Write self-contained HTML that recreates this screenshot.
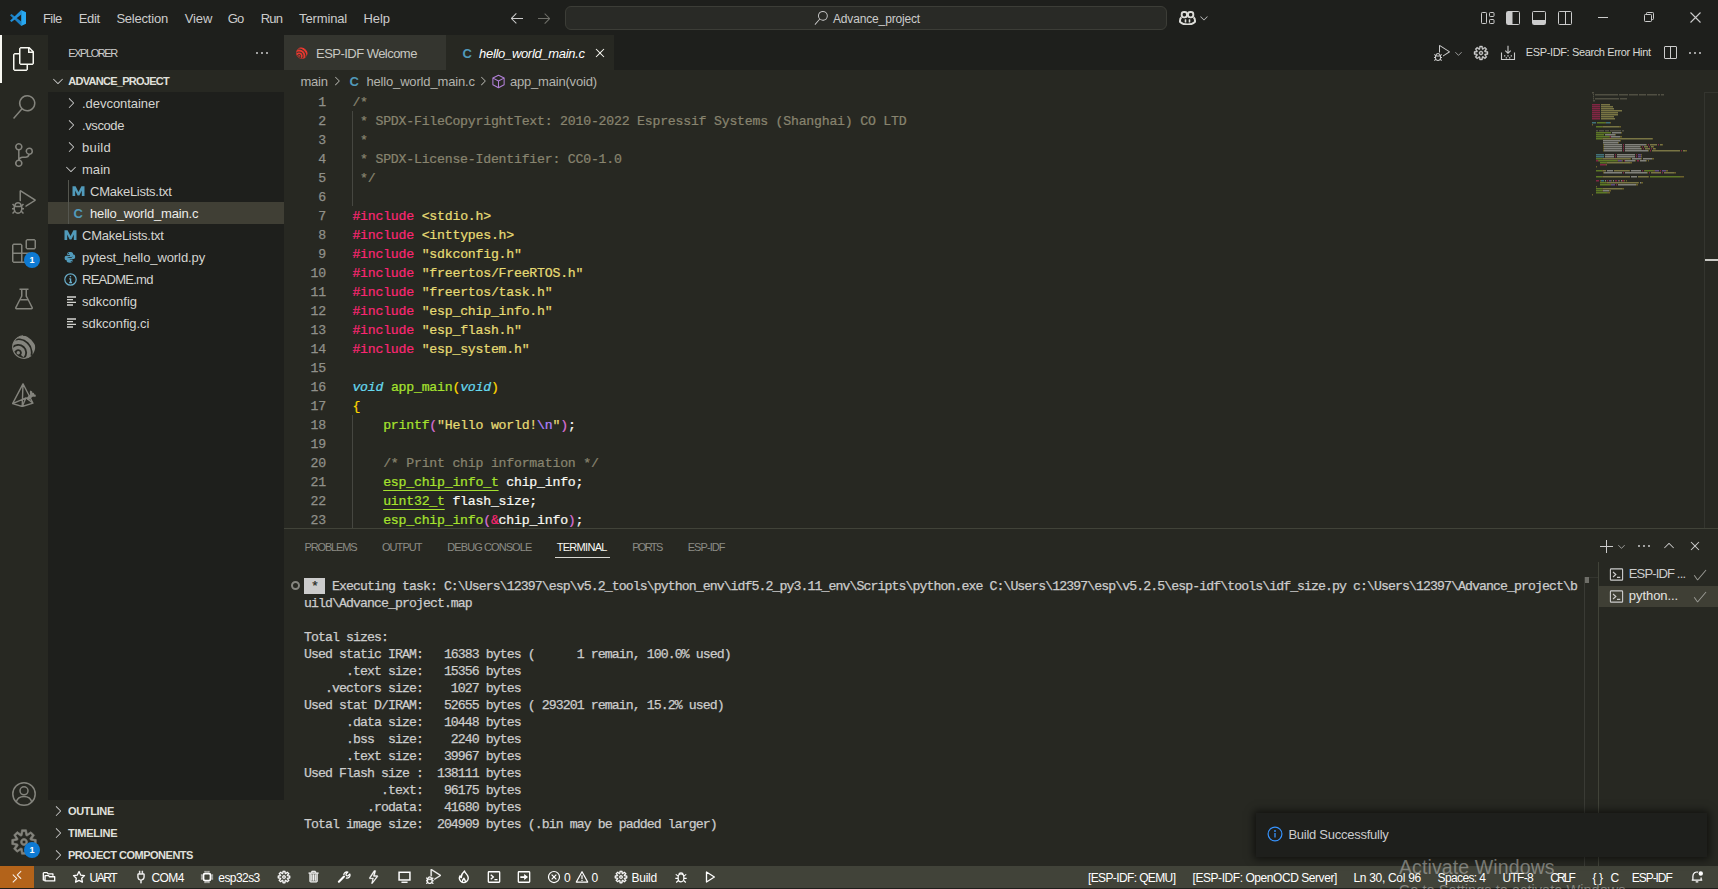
<!DOCTYPE html>
<html lang="en"><head><meta charset="utf-8"><title>hello_world_main.c - Advance_project - Visual Studio Code</title>
<style>
html,body{margin:0;padding:0;}
body{width:1718px;height:889px;overflow:hidden;background:#272822;position:relative;font-family:"Liberation Sans",sans-serif;font-size:13px;color:#ccc;}
.b{position:absolute;display:block;}
.t{position:absolute;white-space:pre;display:block;}
.code{position:absolute;white-space:pre;font-family:"Liberation Mono",monospace;font-size:13.2px;line-height:19px;color:#f8f8f2;letter-spacing:-0.22px;-webkit-text-stroke:0.24px;}
.term{position:absolute;white-space:pre;font-family:"Liberation Mono",monospace;font-size:13.2px;line-height:17px;color:#ccc;letter-spacing:-0.92px;-webkit-text-stroke:0.25px;}
.ln{position:absolute;white-space:pre;font-family:"Liberation Mono",monospace;font-size:13.2px;line-height:19px;color:#90908a;text-align:right;letter-spacing:-0.22px;-webkit-text-stroke:0.25px;}
.k{color:#f92672}.s{color:#e6db74}.c{color:#88846f}.f{color:#a6e22e}.ty{color:#66d9ef;font-style:italic}.u{color:#a6e22e;text-decoration:underline;text-underline-offset:4px;text-decoration-thickness:1px}.e{color:#ae81ff}
.b1{color:#ffd700}.b2{color:#da70d6}.b3{color:#179fff}
</style></head><body>
<div class="b" style="left:0px;top:0px;width:1718px;height:35px;background:#1e1f1c;"></div>
<div class="b" style="left:0px;top:35px;width:48px;height:831px;background:#272822;"></div>
<div class="b" style="left:48px;top:35px;width:236px;height:831px;background:#1e1f1c;"></div>
<div class="b" style="left:284px;top:35px;width:1434px;height:35px;background:#1e1f1c;"></div>
<div class="b" style="left:284px;top:35px;width:162px;height:35px;background:#34352f;"></div>
<div class="b" style="left:446px;top:35px;width:168px;height:35px;background:#272822;"></div>
<div class="b" style="left:0px;top:35px;width:2px;height:48px;background:#f8f8f2;"></div>
<span class="t" style="left:43.0px;top:8.9px;font-size:13px;line-height:20px;color:#cccccc;letter-spacing:-0.584px;">File</span>
<span class="t" style="left:78.8px;top:8.9px;font-size:13px;line-height:20px;color:#cccccc;letter-spacing:-0.369px;">Edit</span>
<span class="t" style="left:116.4px;top:8.9px;font-size:13px;line-height:20px;color:#cccccc;letter-spacing:-0.211px;">Selection</span>
<span class="t" style="left:184.7px;top:8.9px;font-size:13px;line-height:20px;color:#cccccc;letter-spacing:-0.118px;">View</span>
<span class="t" style="left:227.8px;top:8.9px;font-size:13px;line-height:20px;color:#cccccc;letter-spacing:-0.944px;">Go</span>
<span class="t" style="left:260.8px;top:8.9px;font-size:13px;line-height:20px;color:#cccccc;letter-spacing:-0.880px;">Run</span>
<span class="t" style="left:299.1px;top:8.9px;font-size:13px;line-height:20px;color:#cccccc;letter-spacing:-0.146px;">Terminal</span>
<span class="t" style="left:363.5px;top:8.9px;font-size:13px;line-height:20px;color:#cccccc;letter-spacing:-0.083px;">Help</span>
<div class="b" style="left:565px;top:6px;width:600px;height:22px;border:1px solid #3c3d37;border-radius:6px;background:#292a26"></div>
<span class="t" style="left:833.0px;top:8.8px;font-size:12px;line-height:20px;color:#cccccc;letter-spacing:-0.156px;">Advance_project</span>
<span class="t" style="left:68.3px;top:43.0px;font-size:11px;line-height:20px;color:#cccccc;letter-spacing:-1.446px;">EXPLORER</span>
<div class="b" style="left:48px;top:70px;width:236px;height:22px;background:#272822;"></div>
<span class="t" style="left:68.3px;top:71.0px;font-size:11px;line-height:20px;color:#e0e0dc;letter-spacing:-0.733px;font-weight:bold;">ADVANCE_PROJECT</span>
<div class="b" style="left:48px;top:202px;width:236px;height:22px;background:#403f35;"></div>
<div class="b" style="left:68px;top:180px;width:1px;height:44px;background:#55564f;"></div>
<span class="t" style="left:82.0px;top:93.9px;font-size:13px;line-height:20px;color:#d4d4d0;letter-spacing:-0.039px;">.devcontainer</span>
<span class="t" style="left:82.0px;top:115.9px;font-size:13px;line-height:20px;color:#d4d4d0;letter-spacing:-0.402px;">.vscode</span>
<span class="t" style="left:82.0px;top:137.9px;font-size:13px;line-height:20px;color:#d4d4d0;letter-spacing:0.333px;">build</span>
<span class="t" style="left:82.0px;top:159.9px;font-size:13px;line-height:20px;color:#d4d4d0;letter-spacing:0.037px;">main</span>
<span class="t" style="left:90.0px;top:181.9px;font-size:13px;line-height:20px;color:#d4d4d0;letter-spacing:-0.258px;">CMakeLists.txt</span>
<span class="t" style="left:90.0px;top:203.9px;font-size:13px;line-height:20px;color:#ecece8;letter-spacing:-0.164px;">hello_world_main.c</span>
<span class="t" style="left:82.0px;top:225.9px;font-size:13px;line-height:20px;color:#d4d4d0;letter-spacing:-0.258px;">CMakeLists.txt</span>
<span class="t" style="left:82.0px;top:247.9px;font-size:13px;line-height:20px;color:#d4d4d0;letter-spacing:-0.092px;">pytest_hello_world.py</span>
<span class="t" style="left:82.0px;top:269.9px;font-size:13px;line-height:20px;color:#d4d4d0;letter-spacing:-0.737px;">README.md</span>
<span class="t" style="left:82.0px;top:291.9px;font-size:13px;line-height:20px;color:#d4d4d0;letter-spacing:0.022px;">sdkconfig</span>
<span class="t" style="left:82.0px;top:313.9px;font-size:13px;line-height:20px;color:#d4d4d0;letter-spacing:-0.047px;">sdkconfig.ci</span>
<div class="b" style="left:48px;top:800px;width:236px;height:66px;background:#272822;"></div>
<span class="t" style="left:68.0px;top:801.0px;font-size:11px;line-height:20px;color:#e0e0dc;letter-spacing:-0.330px;font-weight:bold;">OUTLINE</span>
<span class="t" style="left:68.0px;top:823.0px;font-size:11px;line-height:20px;color:#e0e0dc;letter-spacing:-0.249px;font-weight:bold;">TIMELINE</span>
<span class="t" style="left:68.0px;top:845.0px;font-size:11px;line-height:20px;color:#e0e0dc;letter-spacing:-0.498px;font-weight:bold;">PROJECT COMPONENTS</span>
<span class="t" style="left:316.1px;top:43.9px;font-size:13px;line-height:20px;color:#c8c8c2;letter-spacing:-0.539px;">ESP-IDF Welcome</span>
<span class="t" style="left:479.1px;top:43.9px;font-size:13px;line-height:20px;color:#ffffff;letter-spacing:-0.317px;font-style:italic;">hello_world_main.c</span>
<span class="t" style="left:1525.8px;top:41.8px;font-size:11px;line-height:20px;color:#d8d8d4;letter-spacing:-0.371px;">ESP-IDF: Search Error Hint</span>
<span class="t" style="left:300.4px;top:71.9px;font-size:13px;line-height:20px;color:#b4b4ae;letter-spacing:-0.196px;">main</span>
<span class="t" style="left:366.4px;top:71.9px;font-size:13px;line-height:20px;color:#b4b4ae;letter-spacing:-0.158px;">hello_world_main.c</span>
<span class="t" style="left:510.0px;top:71.9px;font-size:13px;line-height:20px;color:#b4b4ae;letter-spacing:-0.201px;">app_main(void)</span>
<div class="b" style="left:0px;top:866px;width:1718px;height:22px;background:#414339;"></div>
<div class="b" style="left:0px;top:866px;width:34px;height:22px;background:#b3631a;"></div>
<div class="b" style="left:0px;top:888px;width:1718px;height:1px;background:#1e1f1c;"></div>
<span class="t" style="left:89.4px;top:867.5px;font-size:12px;line-height:20px;color:#ffffff;letter-spacing:-1.418px;">UART</span>
<span class="t" style="left:151.4px;top:867.5px;font-size:12px;line-height:20px;color:#ffffff;letter-spacing:-0.524px;">COM4</span>
<span class="t" style="left:218.3px;top:867.5px;font-size:12px;line-height:20px;color:#ffffff;letter-spacing:-0.562px;">esp32s3</span>
<span class="t" style="left:564.0px;top:867.5px;font-size:12px;line-height:20px;color:#ffffff;letter-spacing:0.000px;">0</span>
<span class="t" style="left:591.5px;top:867.5px;font-size:12px;line-height:20px;color:#ffffff;letter-spacing:0.000px;">0</span>
<span class="t" style="left:631.6px;top:867.5px;font-size:12px;line-height:20px;color:#ffffff;letter-spacing:-0.297px;">Build</span>
<span class="t" style="left:1088.0px;top:867.5px;font-size:12px;line-height:20px;color:#ffffff;letter-spacing:-0.621px;">[ESP-IDF: QEMU]</span>
<span class="t" style="left:1192.5px;top:867.5px;font-size:12px;line-height:20px;color:#ffffff;letter-spacing:-0.441px;">[ESP-IDF: OpenOCD Server]</span>
<span class="t" style="left:1353.4px;top:867.5px;font-size:12px;line-height:20px;color:#ffffff;letter-spacing:-0.299px;">Ln 30, Col 96</span>
<span class="t" style="left:1437.6px;top:867.5px;font-size:12px;line-height:20px;color:#ffffff;letter-spacing:-0.634px;">Spaces: 4</span>
<span class="t" style="left:1502.4px;top:867.5px;font-size:12px;line-height:20px;color:#ffffff;letter-spacing:-0.650px;">UTF-8</span>
<span class="t" style="left:1550.2px;top:867.5px;font-size:12px;line-height:20px;color:#ffffff;letter-spacing:-1.881px;">CRLF</span>
<span class="t" style="left:1592.4px;top:867.5px;font-size:12px;line-height:20px;color:#ffffff;letter-spacing:2.584px;">{}</span>
<span class="t" style="left:1610.4px;top:867.5px;font-size:12px;line-height:20px;color:#ffffff;letter-spacing:0.000px;">C</span>
<span class="t" style="left:1631.8px;top:867.5px;font-size:12px;line-height:20px;color:#ffffff;letter-spacing:-1.057px;">ESP-IDF</span>
<svg class="b" style="left:12px;top:47px;" width="24" height="24" viewBox="0 0 24 24" fill="none"><path d="M17.5 0h-9L7 1.5V6H2.5L1 7.5v15.07L2.5 24h12.07L16 22.57V18h4.7l1.3-1.43V4.5L17.5 0zm0 2.12l2.38 2.38H17.5V2.12zm-3 20.38h-12v-15H7v9.07L8.5 18h6v4.5zm6-6h-12v-15H16V6h4.5v10.5z" fill="#f8f8f2" /></svg>
<svg class="b" style="left:12px;top:95px;" width="24" height="24" viewBox="0 0 24 24" fill="none"><path d="M15.25 0a8.25 8.25 0 0 0-6.18 13.72L1 22.88l1.12 1 8.05-9.12A8.251 8.251 0 1 0 15.25.01V0zm0 15a6.75 6.75 0 1 1 0-13.5 6.75 6.75 0 0 1 0 13.5z" fill="#84847d" /></svg>
<svg class="b" style="left:12px;top:143px;" width="24" height="24" viewBox="0 0 24 24" fill="none"><path d="M21.007 8.222A3.738 3.738 0 0 0 15.045 5.2a3.737 3.737 0 0 0 1.156 6.583 2.988 2.988 0 0 1-2.668 1.67h-2.99a4.456 4.456 0 0 0-2.989 1.165V7.4a3.737 3.737 0 1 0-1.494 0v9.117a3.776 3.776 0 1 0 1.816.099 2.99 2.99 0 0 1 2.668-1.667h2.99a4.484 4.484 0 0 0 4.223-3.039 3.736 3.736 0 0 0 3.25-3.687zM4.565 3.738a2.242 2.242 0 1 1 4.484 0 2.242 2.242 0 0 1-4.484 0zm4.484 16.441a2.242 2.242 0 1 1-4.484 0 2.242 2.242 0 0 1 4.484 0zm8.221-9.715a2.242 2.242 0 1 1 0-4.485 2.242 2.242 0 0 1 0 4.485z" fill="#84847d" /></svg>
<svg class="b" style="left:12px;top:190px;" width="24" height="24" viewBox="0 0 24 24" fill="none"><path d="M10.94 13.5l-1.32 1.32a3.73 3.73 0 0 0-7.24 0L1.06 13.5 0 14.56l1.72 1.72-.22.22V18H0v1.5h1.5v.08c.077.489.214.966.41 1.42L0 22.94 1.06 24l1.65-1.65A4.308 4.308 0 0 0 6 24a4.31 4.31 0 0 0 3.29-1.65L10.94 24 12 22.94 10.09 21c.198-.464.336-.951.41-1.45v-.1H12V18h-1.5v-1.5l-.22-.22L12 14.56l-1.060-1.060zM6 13.5a2.25 2.25 0 0 1 2.25 2.25h-4.500A2.250 2.250 0 0 1 6 13.500zm3 6a3.330 3.330 0 0 1-3 3 3.330 3.330 0 0 1-3-3v-2.250h6v2.250zm14.760-9.900v1.260L13.500 17.370V15.600l8.500-5.370L9 2v9.460a5.070 5.070 0 0 0-1.500-.720V.630L8.640 0l15.120 9.600z" fill="#84847d" /></svg>
<svg class="b" style="left:12px;top:239px;" width="24" height="24" viewBox="0 0 24 24" fill="none"><path d="M13.5 1.5L15 0h7.5L24 1.5V9l-1.5 1.5H15L13.5 9V1.5zm1.5 0V9h7.5V1.5H15zM0 15V6l1.5-1.5H9L10.5 6v7.5H18l1.5 1.5v7.5L18 24H1.5L0 22.5V15zm9-1.5V6H1.5v7.5H9zM9 15H1.5v7.5H9V15zm1.5 7.5H18V15h-7.5v7.5z" fill="#84847d" /></svg>
<svg class="b" style="left:12px;top:287px;" width="24" height="24" viewBox="0 0 16 16" fill="none"><path d="M13.893 13.558L10 6.006v-4h1v-1H9.994V1l-.456.005H5V2h1v3.952l-3.894 7.609A1 1 0 0 0 3 15.006h10a1 1 0 0 0 .893-1.448zm-7-7.15L7 6.178V2h2v4.248l.107.23.916 1.528H5.977l.916-1.598zM3 14.017l2.457-5.01h5.087L13 14.017H3z" fill="#84847d" /></svg>
<svg class="b" style="left:12px;top:335px;" width="24" height="24" viewBox="0 0 24 24" fill="none"><clipPath id="ec1"><circle cx="12" cy="12" r="11.200"/></clipPath><g clip-path="url(#ec1)" fill="none" stroke="#84847d"><path d="M1.22 15.99A5.30 5.30 0 1 1 10.26 21.21" stroke-width="3.400"/><path d="M-2.07 10.86A10.80 10.80 0 1 1 13.84 25.44" stroke-width="3.800"/><path d="M-2.00 3.60A16.40 16.40 0 0 1 20.40 26.00" stroke-width="4"/></g><path d="M19.26 20.66A11.30 11.30 0 1 1 11.02 0.74" stroke="#84847d" stroke-width="1.100" fill="none"/><circle cx="6.300" cy="17.700" r="1.700" fill="#84847d"/></svg>
<svg class="b" style="left:12px;top:383px;" width="24" height="24" viewBox="0 0 24 24" fill="none"><path d="M11 .8L.6 20.600l9.600 2.900 10.800-3.300zM11 .8l-.8 22.700M.6 20.600l13.400-5.800 7 5.400M14 14.800l-3.800 8.700" stroke="#84847d" stroke-width="1.4" fill="none" stroke-linejoin="round"/><path d="M16.400 15.400l4.200-4.200" stroke="#84847d" stroke-width="3.4" fill="none" stroke-linecap="round"/><path d="M19.300 8a3.200 3.200 0 0 0 4.300 4.300" stroke="#84847d" stroke-width="2.2" fill="none" /></svg>
<svg class="b" style="left:12px;top:782px;" width="24" height="24" viewBox="0 0 24 24" fill="none"><circle cx="12" cy="12" r="11.2" stroke="#84847d" stroke-width="1.5" fill="none"/><circle cx="12" cy="8.800" r="4" stroke="#84847d" stroke-width="1.500" fill="none"/><path d="M4.300 20c.9-3.700 3.900-5.500 7.700-5.500s6.800 1.800 7.700 5.500" stroke="#84847d" stroke-width="1.5" fill="none" /></svg>
<svg class="b" style="left:10px;top:828.3px;" width="28" height="28" viewBox="0 0 16 16" fill="none"><path d="M9.1 4.4L8.6 2H7.4l-.5 2.4-.7.3-2-1.3-.9.8 1.3 2-.2.7-2.4.5v1.2l2.4.5.3.8-1.3 2 .8.8 2-1.3.8.3.4 2.3h1.2l.5-2.4.8-.3 2 1.3.8-.8-1.3-2 .3-.8 2.3-.4V7.4l-2.4-.5-.3-.8 1.3-2-.8-.8-2 1.3-.7-.2zM9.4 1l.5 2.4L12 2.1l2 2-1.4 2.1 2.4.4v2.8l-2.4.5L14 12l-2 2-2.1-1.4-.5 2.4H6.6l-.5-2.4L4 13.9l-2-2 1.4-2.1L1 9.4V6.6l2.4-.5L2.1 4l2-2 2.1 1.4.4-2.4h2.8zm.6 7c0 1.1-.9 2-2 2s-2-.9-2-2 .9-2 2-2 2 .9 2 2zM8 9c.6 0 1-.4 1-1s-.4-1-1-1-1 .4-1 1 .4 1 1 1z" fill="#84847d" stroke="#84847d" stroke-width=".35"/></svg>
<div class="b" style="left:24px;top:251.5px;width:16px;height:16px;border-radius:8px;background:#0e7ad3"></div>
<span class="t" style="left:29.4px;top:253.8px;font-size:9px;line-height:12px;color:#ffffff;letter-spacing:0.000px;font-weight:bold;">1</span>
<div class="b" style="left:24px;top:841.7px;width:16px;height:16px;border-radius:8px;background:#0e7ad3"></div>
<span class="t" style="left:29.4px;top:844.0px;font-size:9px;line-height:12px;color:#ffffff;letter-spacing:0.000px;font-weight:bold;">1</span>
<svg class="b" style="left:10px;top:10px;" width="16" height="16" viewBox="0 0 16 16" fill="none"><path d="M0 5.300L1.500 4l9.800 7.600v4.300z" fill="#1b80c6"/><path d="M0 10.700L1.500 12l9.800-7.600V.1z" fill="#218fd8"/><path d="M11.200 .1L16 2.200v11.600l-4.800 2.100z" fill="#27a7f1"/></svg>
<svg class="b" style="left:509px;top:10px;" width="16" height="16" viewBox="0 0 16 16" fill="none"><path d="M7 3.093l-5 5V8.8l5 5 .707-.707-4.146-4.147H14v-1H3.56L7.707 3.8 7 3.093z" fill="#cccccc" /></svg>
<svg class="b" style="left:536px;top:10px;" width="16" height="16" viewBox="0 0 16 16" fill="none"><path d="M9 13.887l5-5V8.18l-5-5-.707.707 4.146 4.147H2v1h10.44L8.293 13.18l.707.707z" fill="#6f6f69" /></svg>
<svg class="b" style="left:814px;top:11px;" width="14" height="14" viewBox="0 0 24 24" fill="none"><path d="M15.25 0a8.25 8.25 0 0 0-6.18 13.72L1 22.88l1.12 1 8.05-9.12A8.251 8.251 0 1 0 15.25.01V0zm0 15a6.75 6.75 0 1 1 0-13.5 6.75 6.75 0 0 1 0 13.5z" fill="#cccccc" /></svg>
<svg class="b" style="left:1179px;top:10.6px;" width="17" height="14.6" viewBox="0 0 17 14.600" fill="none"><path d="M2.400 6.400C1 7.300 1 8.700 1 9.800v1.100c1.900 1.900 4.600 2.700 7.500 2.700s5.600-.8 7.500-2.700V9.800c0-1.100 0-2.500-1.400-3.400" stroke="#dcdcd8" stroke-width="2" fill="none"/><rect x="2.700" y="1" width="5.300" height="5.400" rx="2.300" stroke="#dcdcd8" stroke-width="1.900"/><rect x="9" y="1" width="5.300" height="5.400" rx="2.300" stroke="#dcdcd8" stroke-width="1.900"/><rect x="5.700" y="8.200" width="1.600" height="3.300" rx=".5" fill="#dcdcd8"/><rect x="9.700" y="8.200" width="1.600" height="3.300" rx=".5" fill="#dcdcd8"/></svg>
<svg class="b" style="left:1198px;top:12px;" width="12" height="12" viewBox="0 0 16 16" fill="none"><path d="M7.976 10.072l4.357-4.357.62.618L8.284 11h-.618L3 6.333l.619-.618 4.357 4.357z" fill="#cccccc" /></svg>
<svg class="b" style="left:1479.5px;top:10px;" width="16" height="16" viewBox="0 0 16 16" fill="none"><rect x="1.500" y="2.500" width="5" height="11" rx=".8" stroke="#cccccc"/><rect x="9.500" y="2.500" width="4.500" height="4" rx=".8" stroke="#cccccc"/><rect x="9.500" y="9.500" width="4.500" height="4" rx=".8" stroke="#cccccc"/></svg>
<svg class="b" style="left:1505px;top:10px;" width="16" height="16" viewBox="0 0 16 16" fill="none"><rect x="1.500" y="1.500" width="13" height="13" rx="1" stroke="#cccccc"/><rect x="2" y="2" width="5.500" height="12" fill="#cccccc"/></svg>
<svg class="b" style="left:1531px;top:10px;" width="16" height="16" viewBox="0 0 16 16" fill="none"><rect x="1.500" y="1.500" width="13" height="13" rx="1" stroke="#cccccc"/><rect x="2" y="10" width="12" height="4" fill="#cccccc"/></svg>
<svg class="b" style="left:1557px;top:10px;" width="16" height="16" viewBox="0 0 16 16" fill="none"><rect x="1.500" y="1.500" width="13" height="13" rx="1" stroke="#cccccc"/><path d="M8.500 2v12" stroke="#cccccc"/></svg>
<div class="b" style="left:1598px;top:17px;width:10px;height:1px;background:#cccccc;"></div>
<svg class="b" style="left:1643px;top:11px;" width="12" height="12" viewBox="0 0 12 12" fill="none"><path d="M3.500 3.500V2.300a.8.8 0 0 1 .8-.8h5.400a.8.8 0 0 1 .8.8v5.400a.8.8 0 0 1-.8.8H8.500" stroke="#ccc"/><rect x="1.500" y="3.500" width="7" height="7" rx=".8" stroke="#ccc"/></svg>
<svg class="b" style="left:1689.5px;top:11.5px;" width="11" height="11" viewBox="0 0 11 11" fill="none"><path d="M.5.500l10 10M10.500.500l-10 10" stroke="#ccc" stroke-width="1.100"/></svg>
<svg class="b" style="left:254px;top:45px;" width="16" height="16" viewBox="0 0 16 16" fill="none"><path d="M4 8a1 1 0 1 1-2 0 1 1 0 0 1 2 0zm5 0a1 1 0 1 1-2 0 1 1 0 0 1 2 0zm5 0a1 1 0 1 1-2 0 1 1 0 0 1 2 0z" fill="#cccccc" /></svg>
<svg class="b" style="left:50px;top:73px;" width="16" height="16" viewBox="0 0 16 16" fill="none"><path d="M7.976 10.072l4.357-4.357.62.618L8.284 11h-.618L3 6.333l.619-.618 4.357 4.357z" fill="#cccccc" /></svg>
<svg class="b" style="left:63px;top:95px;" width="16" height="16" viewBox="0 0 16 16" fill="none"><path d="M10.072 8.024L5.715 3.667l.618-.62L11 7.716v.618L6.333 13l-.618-.619 4.357-4.357z" fill="#cccccc" /></svg>
<svg class="b" style="left:63px;top:117px;" width="16" height="16" viewBox="0 0 16 16" fill="none"><path d="M10.072 8.024L5.715 3.667l.618-.62L11 7.716v.618L6.333 13l-.618-.619 4.357-4.357z" fill="#cccccc" /></svg>
<svg class="b" style="left:63px;top:139px;" width="16" height="16" viewBox="0 0 16 16" fill="none"><path d="M10.072 8.024L5.715 3.667l.618-.62L11 7.716v.618L6.333 13l-.618-.619 4.357-4.357z" fill="#cccccc" /></svg>
<svg class="b" style="left:63px;top:161px;" width="16" height="16" viewBox="0 0 16 16" fill="none"><path d="M7.976 10.072l4.357-4.357.62.618L8.284 11h-.618L3 6.333l.619-.618 4.357 4.357z" fill="#cccccc" /></svg>
<svg class="b" style="left:50px;top:803px;" width="16" height="16" viewBox="0 0 16 16" fill="none"><path d="M10.072 8.024L5.715 3.667l.618-.62L11 7.716v.618L6.333 13l-.618-.619 4.357-4.357z" fill="#cccccc" /></svg>
<svg class="b" style="left:50px;top:825px;" width="16" height="16" viewBox="0 0 16 16" fill="none"><path d="M10.072 8.024L5.715 3.667l.618-.62L11 7.716v.618L6.333 13l-.618-.619 4.357-4.357z" fill="#cccccc" /></svg>
<svg class="b" style="left:50px;top:847px;" width="16" height="16" viewBox="0 0 16 16" fill="none"><path d="M10.072 8.024L5.715 3.667l.618-.62L11 7.716v.618L6.333 13l-.618-.619 4.357-4.357z" fill="#cccccc" /></svg>
<svg class="b" style="left:71.7px;top:185px;" width="13" height="12" viewBox="0 0 13 12" fill="none"><path d="M.5 11V1.200h3.100l2.900 5.800 2.900-5.800h3.100V11H9.800V5.600L7.400 10.400H5.600L3.200 5.600V11z" fill="#519aba"/></svg>
<svg class="b" style="left:63.7px;top:229px;" width="13" height="12" viewBox="0 0 13 12" fill="none"><path d="M.5 11V1.200h3.100l2.900 5.800 2.900-5.800h3.100V11H9.800V5.600L7.400 10.400H5.600L3.200 5.600V11z" fill="#519aba"/></svg>
<span class="t" style="left:73.6px;top:203.9px;font-size:13px;line-height:20px;color:#519aba;letter-spacing:0.000px;font-weight:bold;">C</span>
<svg class="b" style="left:63.9px;top:251.1px;" width="11.8" height="11.8" viewBox="0 0 13 13" fill="none"><path d="M6.400 1C4.600 1 3.600 1.700 3.600 2.900v1.600h3v.6H2.500C1.400 5.100.7 6 .7 7.600s.7 2.500 1.800 2.500h1.100V8.500c0-1.100.9-1.900 2-1.900h2.800c.9 0 1.600-.7 1.600-1.600V2.900C10 1.700 8.700 1 6.400 1zM5 1.900a.6.6 0 1 1 0 1.200.6.6 0 0 1 0-1.200z" fill="#519aba"/><path d="M9.400 3.900v1.500c0 1.100-.9 2-2 2H4.600c-.9 0-1.600.7-1.600 1.600v2.100c0 1.200 1.300 1.900 3.600 1.900 1.800 0 2.800-.7 2.800-1.900V9.500h-3v-.6h4.100c1.100 0 1.800-.9 1.800-2.500s-.7-2.500-1.800-2.500zM8 10.900a.6.600 0 1 1 0 1.200.6.600 0 0 1 0-1.200z" fill="#519aba"/></svg>
<svg class="b" style="left:63.5px;top:272.8px;" width="13" height="13" viewBox="0 0 13 13" fill="none"><circle cx="6.500" cy="6.500" r="5.700" stroke="#6aaecb" stroke-width="1.200"/><path d="M6.600 5.600v4M5.200 5.800h1.400M5.200 9.500h2.800" stroke="#6aaecb" stroke-width="1.300"/><circle cx="6.400" cy="3.700" r=".8" fill="#6aaecb"/></svg>
<svg class="b" style="left:67px;top:296px;" width="10" height="10" viewBox="0 0 10 10" fill="none"><path d="M0 1h9M0 3.700h6M0 6.300h9M0 9h6" stroke="#d4d4d0" stroke-width="1.300"/></svg>
<svg class="b" style="left:67px;top:318px;" width="10" height="10" viewBox="0 0 10 10" fill="none"><path d="M0 1h9M0 3.700h6M0 6.300h9M0 9h6" stroke="#d4d4d0" stroke-width="1.300"/></svg>
<svg class="b" style="left:295.9px;top:47.2px;" width="12" height="12" viewBox="0 0 24 24" fill="none"><clipPath id="ec2"><circle cx="12" cy="12" r="11.200"/></clipPath><g clip-path="url(#ec2)" fill="none" stroke="#e8382f"><path d="M1.22 15.99A5.30 5.30 0 1 1 10.26 21.21" stroke-width="3.400"/><path d="M-2.07 10.86A10.80 10.80 0 1 1 13.84 25.44" stroke-width="3.800"/><path d="M-2.00 3.60A16.40 16.40 0 0 1 20.40 26.00" stroke-width="4"/></g><path d="M19.26 20.66A11.30 11.30 0 1 1 11.02 0.74" stroke="#e8382f" stroke-width="1.100" fill="none"/><circle cx="6.300" cy="17.700" r="1.700" fill="#e8382f"/></svg>
<span class="t" style="left:462.4px;top:43.9px;font-size:13px;line-height:20px;color:#519aba;letter-spacing:0.000px;font-weight:bold;">C</span>
<svg class="b" style="left:591.5px;top:45px;" width="16" height="16" viewBox="0 0 16 16" fill="none"><path d="M8 8.707l3.646 3.647.708-.707L8.707 8l3.647-3.646-.707-.708L8 7.293 4.354 3.646l-.707.708L7.293 8l-3.646 3.646.707.708L8 8.707z" fill="#f8f8f2" /></svg>
<svg class="b" style="left:1434px;top:44.5px;" width="16" height="16" viewBox="0 0 24 24" fill="none"><path d="M10.94 13.5l-1.32 1.32a3.73 3.73 0 0 0-7.24 0L1.06 13.5 0 14.56l1.72 1.72-.22.22V18H0v1.5h1.5v.08c.077.489.214.966.41 1.42L0 22.94 1.06 24l1.65-1.65A4.308 4.308 0 0 0 6 24a4.31 4.31 0 0 0 3.29-1.65L10.94 24 12 22.94 10.09 21c.198-.464.336-.951.41-1.45v-.1H12V18h-1.5v-1.5l-.22-.22L12 14.56l-1.060-1.060zM6 13.5a2.25 2.25 0 0 1 2.25 2.25h-4.500A2.250 2.250 0 0 1 6 13.500zm3 6a3.330 3.330 0 0 1-3 3 3.330 3.330 0 0 1-3-3v-2.250h6v2.250zm14.760-9.900v1.260L13.500 17.370V15.600l8.500-5.370L9 2v9.460a5.070 5.070 0 0 0-1.500-.720V.630L8.640 0l15.120 9.600z" fill="#cccccc" /></svg>
<svg class="b" style="left:1453px;top:47.5px;" width="11" height="11" viewBox="0 0 16 16" fill="none"><path d="M7.976 10.072l4.357-4.357.62.618L8.284 11h-.618L3 6.333l.619-.618 4.357 4.357z" fill="#cccccc" /></svg>
<svg class="b" style="left:1473px;top:44.5px;" width="16" height="16" viewBox="0 0 16 16" fill="none"><path d="M9.1 4.4L8.6 2H7.4l-.5 2.4-.7.3-2-1.3-.9.8 1.3 2-.2.7-2.4.5v1.2l2.4.5.3.8-1.3 2 .8.8 2-1.3.8.3.4 2.3h1.2l.5-2.4.8-.3 2 1.3.8-.8-1.3-2 .3-.8 2.3-.4V7.4l-2.4-.5-.3-.8 1.3-2-.8-.8-2 1.3-.7-.2zM9.4 1l.5 2.4L12 2.1l2 2-1.4 2.1 2.4.4v2.8l-2.4.5L14 12l-2 2-2.1-1.4-.5 2.4H6.6l-.5-2.4L4 13.9l-2-2 1.4-2.1L1 9.4V6.6l2.4-.5L2.1 4l2-2 2.1 1.4.4-2.4h2.8zm.6 7c0 1.1-.9 2-2 2s-2-.9-2-2 .9-2 2-2 2 .9 2 2zM8 9c.6 0 1-.4 1-1s-.4-1-1-1-1 .4-1 1 .4 1 1 1z" fill="#ccc" stroke="#ccc" stroke-width=".4"/></svg>
<svg class="b" style="left:1499.5px;top:45px;" width="16" height="16" viewBox="0 0 16 16" fill="none"><path d="M1.500 7.500v7h13v-7M8 .8v7.400M5.300 5.600L8 8.300l2.700-2.700" stroke="#cccccc" stroke-width="1.1" fill="none" /><path d="M4 10.200h1.300v1.300H4zM7.300 10.200h1.400v1.300H7.300zM10.700 10.200H12v1.300h-1.300zM5.700 12.300H7v1.300H5.700zM9 12.300h1.300v1.300H9z" fill="#cccccc"/></svg>
<svg class="b" style="left:1661.5px;top:44.5px;" width="16" height="16" viewBox="0 0 16 16" fill="none"><path d="M14 1H3L2 2v11l1 1h11l1-1V2l-1-1zM8 13H3V2h5v11zm6 0H9V2h5v11z" fill="#cccccc" /></svg>
<svg class="b" style="left:1687px;top:44.5px;" width="16" height="16" viewBox="0 0 16 16" fill="none"><path d="M4 8a1 1 0 1 1-2 0 1 1 0 0 1 2 0zm5 0a1 1 0 1 1-2 0 1 1 0 0 1 2 0zm5 0a1 1 0 1 1-2 0 1 1 0 0 1 2 0z" fill="#cccccc" /></svg>
<svg class="b" style="left:330px;top:74px;" width="14" height="14" viewBox="0 0 16 16" fill="none"><path d="M10.072 8.024L5.715 3.667l.618-.62L11 7.716v.618L6.333 13l-.618-.619 4.357-4.357z" fill="#b4b4ae" /></svg>
<span class="t" style="left:349.6px;top:71.9px;font-size:13px;line-height:20px;color:#519aba;letter-spacing:0.000px;font-weight:bold;">C</span>
<svg class="b" style="left:476px;top:74px;" width="14" height="14" viewBox="0 0 16 16" fill="none"><path d="M10.072 8.024L5.715 3.667l.618-.62L11 7.716v.618L6.333 13l-.618-.619 4.357-4.357z" fill="#b4b4ae" /></svg>
<svg class="b" style="left:491px;top:74px;" width="15" height="15" viewBox="0 0 16 16" fill="none"><path d="M8 1.300L2 4.300v7.200l6 3.200 6-3.200V4.300zM2.200 4.400L8 7.500l5.800-3.100M8 7.500v7" stroke="#b180d7" stroke-width="1.1" fill="none" stroke-linejoin="round"/></svg>
<svg class="b" style="left:10px;top:870px;" width="14" height="14" viewBox="0 0 16 16" fill="none"><path d="M12.904 9.57L8.928 5.596l3.976-3.976-.619-.62L8 5.286v.619l4.285 4.285.619-.62zM3 5.62l4.072 4.05L3 13.745l.619.619L8 9.98v-.62L3.619 5 3 5.62z" fill="#ffffff" stroke="#ffffff" stroke-width="0.3"/></svg>
<svg class="b" style="left:42px;top:870px;" width="14" height="14" viewBox="0 0 16 16" fill="none"><path d="M1.500 3v8.500h1.500M1.500 3h4.300l1.200 1.500h5.500v2M3.500 12.500v-6h4l1 1.200h6v4.800z" stroke="#ffffff" stroke-width="1.5" fill="none" stroke-linejoin="round"/></svg>
<svg class="b" style="left:72px;top:869.5px;" width="14" height="14" viewBox="0 0 16 16" fill="none"><path d="M8 1.800l1.900 4 4.400.6-3.200 3.100.8 4.400L8 11.800l-3.900 2.100.8-4.400L1.700 6.400l4.400-.6z" stroke="#ffffff" stroke-width="1.5" fill="none" stroke-linejoin="round"/></svg>
<svg class="b" style="left:134px;top:869.5px;" width="14" height="14" viewBox="0 0 16 16" fill="none"><path d="M7 1H6v3H4.5l-.5.5V8a4 4 0 0 0 3.5 3.969V15h1v-3.031A4 4 0 0 0 12 8V4.5l-.5-.5H10V1H9v3H7V1zm3.121 9.121A3 3 0 0 1 5 8V5h6v3a3 3 0 0 1-.879 2.121z" fill="#ffffff" stroke="#ffffff" stroke-width="0.45"/></svg>
<svg class="b" style="left:200px;top:869.5px;" width="14" height="14" viewBox="0 0 16 16" fill="none"><rect x="4" y="4" width="8" height="8" rx="1.800" stroke="#ffffff" stroke-width="2"/><path d="M5.800 1v2M8 1v2M10.200 1v2M5.800 13v2M8 13v2M10.200 13v2M1 5.800h2M1 8h2M1 10.200h2M13 5.800h2M13 8h2M13 10.200h2" stroke="#ffffff" stroke-width="1.1" fill="none" /></svg>
<svg class="b" style="left:276.5px;top:869.5px;" width="14" height="14" viewBox="0 0 16 16" fill="none"><path d="M9.1 4.4L8.6 2H7.4l-.5 2.4-.7.3-2-1.3-.9.8 1.3 2-.2.7-2.4.5v1.2l2.4.5.3.8-1.3 2 .8.8 2-1.3.8.3.4 2.3h1.2l.5-2.4.8-.3 2 1.3.8-.8-1.3-2 .3-.8 2.3-.4V7.4l-2.4-.5-.3-.8 1.3-2-.8-.8-2 1.3-.7-.2zM9.4 1l.5 2.4L12 2.1l2 2-1.4 2.1 2.4.4v2.8l-2.4.5L14 12l-2 2-2.1-1.4-.5 2.4H6.6l-.5-2.4L4 13.9l-2-2 1.4-2.1L1 9.4V6.6l2.4-.5L2.1 4l2-2 2.1 1.4.4-2.4h2.8zm.6 7c0 1.1-.9 2-2 2s-2-.9-2-2 .9-2 2-2 2 .9 2 2zM8 9c.6 0 1-.4 1-1s-.4-1-1-1-1 .4-1 1 .4 1 1 1z" fill="#ffffff" stroke="#ffffff" stroke-width="0.55"/></svg>
<svg class="b" style="left:306.5px;top:869.5px;" width="14" height="14" viewBox="0 0 16 16" fill="none"><path d="M10 3h3v1h-1v9l-1 1H4l-1-1V4H2V3h3V2a1 1 0 0 1 1-1h3a1 1 0 0 1 1 1v1zM9 2H6v1h3V2zM4 13h7V4H4v9zm2-8H5v7h1V5zm1 0h1v7H7V5zm2 0h1v7H9V5z" fill="#ffffff" stroke="#ffffff" stroke-width="0.5"/></svg>
<svg class="b" style="left:336.5px;top:869.5px;" width="14" height="14" viewBox="0 0 17 16" fill="none"><path d="M2.300 13.700l6.200-6.200" stroke="#ffffff" stroke-width="2.6" fill="none" stroke-linecap="round"/><path d="M8.300 5.600a3.600 3.600 0 0 1 4.900-3.500l-2.300 2.300.4 1.900 1.900.4 2.300-2.300a3.600 3.600 0 0 1-4.700 4.700" stroke="#ffffff" stroke-width="1.5" fill="none" stroke-linejoin="round"/></svg>
<svg class="b" style="left:367px;top:869.5px;" width="14" height="14" viewBox="0 0 16 16" fill="none"><path d="M7.99 0.5L2.5 9.06l.41.94h3.62l-1.5 5.44.94.36 6.5-8.44-.4-.94H8.59l1.5-5.53-.94-.39zm-.52 8.5H3.820l4.5-6.73-1.18 4.36.48.87h3.44L6.320 13.800 7.470 9z" fill="#ffffff" stroke="#ffffff" stroke-width="0.4"/></svg>
<svg class="b" style="left:396.5px;top:869.5px;" width="15" height="14" viewBox="0 0 16 16" fill="none"><rect x="1.800" y="2.600" width="12.400" height="8.800" stroke="#ffffff" stroke-width="1.700"/><path d="M4.500 14h7" stroke="#ffffff" stroke-width="1.6" fill="none" /></svg>
<svg class="b" style="left:426px;top:869px;" width="15" height="15" viewBox="0 0 24 24" fill="none"><path d="M10.94 13.5l-1.32 1.32a3.73 3.73 0 0 0-7.24 0L1.06 13.5 0 14.56l1.72 1.72-.22.22V18H0v1.5h1.5v.08c.077.489.214.966.41 1.42L0 22.94 1.06 24l1.65-1.65A4.308 4.308 0 0 0 6 24a4.31 4.31 0 0 0 3.29-1.65L10.94 24 12 22.94 10.09 21c.198-.464.336-.951.41-1.45v-.1H12V18h-1.5v-1.5l-.22-.22L12 14.56l-1.060-1.060zM6 13.5a2.25 2.25 0 0 1 2.25 2.25h-4.500A2.250 2.250 0 0 1 6 13.500zm3 6a3.330 3.330 0 0 1-3 3 3.330 3.330 0 0 1-3-3v-2.250h6v2.250zm14.760-9.900v1.260L13.500 17.370V15.600l8.500-5.370L9 2v9.460a5.070 5.070 0 0 0-1.500-.720V.630L8.640 0l15.120 9.600z" fill="#ffffff" stroke="#ffffff" stroke-width=".6"/></svg>
<svg class="b" style="left:456.5px;top:869.5px;" width="14" height="14" viewBox="0 0 16 16" fill="none"><path d="M8.600 1.200c.3 2 2.800 3.400 3.700 5.600.9 2.300.5 4.800-1.300 6.300a5.100 5.100 0 0 1-6.700-.3c-1.800-1.800-1.900-4.300-.8-6.200.2 1 .8 1.700 1.500 2-.2-2.600 1.200-5.300 3.600-7.400zM6.300 13.800c-.6-1.800.5-3 1.700-4.300.3 1.300 1.900 2.200 1.400 4.300" stroke="#ffffff" stroke-width="1.6" fill="none" stroke-linejoin="round"/></svg>
<svg class="b" style="left:486.5px;top:869.5px;" width="14" height="14" viewBox="0 0 16 16" fill="none"><rect x="1.500" y="2" width="13" height="12" rx=".8" stroke="#ffffff" stroke-width="1.5"/><path d="M4.300 5.300l3 2.700-3 2.700M8.500 11h3.500" stroke="#ffffff" stroke-width="1.5" fill="none" /></svg>
<svg class="b" style="left:516.5px;top:869.5px;" width="14" height="14" viewBox="0 0 16 16" fill="none"><rect x="1.500" y="2" width="13" height="12" rx=".8" stroke="#ffffff" stroke-width="1.500"/><path d="M3.800 7h4.400V4.500L12.600 8l-4.400 3.500V9H3.800z" fill="#ffffff"/></svg>
<svg class="b" style="left:546.5px;top:869.5px;" width="14" height="14" viewBox="0 0 16 16" fill="none"><circle cx="8" cy="8" r="6.300" stroke="#ffffff" stroke-width="1.400"/><path d="M5.300 5.300l5.400 5.400M10.700 5.300l-5.400 5.400" stroke="#ffffff" stroke-width="1.4" fill="none" /></svg>
<svg class="b" style="left:574.5px;top:869.5px;" width="14" height="14" viewBox="0 0 16 16" fill="none"><path d="M8 2L1.500 13.800h13z" stroke="#ffffff" stroke-width="1.4" fill="none" stroke-linejoin="round"/><path d="M8 6v4.300M8 11.200V12.700" stroke="#ffffff" stroke-width="1.4" fill="none" /></svg>
<svg class="b" style="left:614px;top:869.5px;" width="14" height="14" viewBox="0 0 16 16" fill="none"><path d="M9.1 4.4L8.6 2H7.4l-.5 2.4-.7.3-2-1.3-.9.8 1.3 2-.2.7-2.4.5v1.2l2.4.5.3.8-1.3 2 .8.8 2-1.3.8.3.4 2.3h1.2l.5-2.4.8-.3 2 1.3.8-.8-1.3-2 .3-.8 2.3-.4V7.4l-2.4-.5-.3-.8 1.3-2-.8-.8-2 1.3-.7-.2zM9.4 1l.5 2.4L12 2.1l2 2-1.4 2.1 2.4.4v2.8l-2.4.5L14 12l-2 2-2.1-1.4-.5 2.4H6.6l-.5-2.4L4 13.9l-2-2 1.4-2.1L1 9.4V6.6l2.4-.5L2.1 4l2-2 2.1 1.4.4-2.4h2.8zm.6 7c0 1.1-.9 2-2 2s-2-.9-2-2 .9-2 2-2 2 .9 2 2zM8 9c.6 0 1-.4 1-1s-.4-1-1-1-1 .4-1 1 .4 1 1 1z" fill="#ffffff" stroke="#ffffff" stroke-width="0.55"/></svg>
<svg class="b" style="left:673.5px;top:869.5px;" width="14" height="14" viewBox="0 0 16 16" fill="none"><ellipse cx="8" cy="9" rx="3.300" ry="4.500" stroke="#ffffff" stroke-width="1.400"/><path d="M5.300 5.300a2.800 2.800 0 0 1 5.400 0M4.800 7L2 5M11.200 7L14 5M4.700 9.500H1.500M11.300 9.500h3.200M5 12l-2.500 2.300M11 12l2.500 2.300" stroke="#ffffff" stroke-width="1.3" fill="none" /></svg>
<svg class="b" style="left:703px;top:869.5px;" width="14" height="14" viewBox="0 0 16 16" fill="none"><path d="M4 2.300v11.400L13 8z" stroke="#ffffff" stroke-width="1.5" fill="none" stroke-linejoin="round"/></svg>
<svg class="b" style="left:1689.5px;top:869.5px;" width="14" height="14" viewBox="0 0 16 16" fill="none"><path d="M3.300 11.500V7a4.700 4.700 0 0 1 6-4.500M12.700 8.500v3M2 11.500h12M6.500 13.500h3" stroke="#ffffff" stroke-width="1.4" fill="none" /><circle cx="12.300" cy="4" r="2.500" fill="#ffffff"/></svg>
<div class="ln" style="left:296px;top:92.9px;width:30px">1
2
3
4
5
6
7
8
9
10
11
12
13
14
15
16
17
18
19
20
21
22
23</div>
<div class="code" style="left:352.400px;top:92.9px"><span class="c">/*</span>
<span class="c"> * SPDX-FileCopyrightText: 2010-2022 Espressif Systems (Shanghai) CO LTD</span>
<span class="c"> *</span>
<span class="c"> * SPDX-License-Identifier: CC0-1.0</span>
<span class="c"> */</span>

<span class="k">#include</span> <span class="s">&lt;stdio.h&gt;</span>
<span class="k">#include</span> <span class="s">&lt;inttypes.h&gt;</span>
<span class="k">#include</span> <span class="s">"sdkconfig.h"</span>
<span class="k">#include</span> <span class="s">"freertos/FreeRTOS.h"</span>
<span class="k">#include</span> <span class="s">"freertos/task.h"</span>
<span class="k">#include</span> <span class="s">"esp_chip_info.h"</span>
<span class="k">#include</span> <span class="s">"esp_flash.h"</span>
<span class="k">#include</span> <span class="s">"esp_system.h"</span>

<span class="ty">void</span> <span class="f">app_main</span><span class="b1">(</span><span class="ty">void</span><span class="b1">)</span>
<span class="b1">{</span>
    <span class="f">printf</span><span class="b2">(</span><span class="s">"Hello world!</span><span class="e">\n</span><span class="s">"</span><span class="b2">)</span>;

    <span class="c">/* Print chip information */</span>
    <span class="u">esp_chip_info_t</span> chip_info;
    <span class="u">uint32_t</span> flash_size;
    <span class="f">esp_chip_info</span><span class="b2">(</span><span class="k">&amp;</span>chip_info<span class="b2">)</span>;</div>
<div class="b" style="left:352px;top:111px;width:1px;height:95px;background:#464741;"></div>
<div class="b" style="left:352px;top:415px;width:1px;height:114px;background:#464741;"></div>
<svg class="b" style="left:1592px;top:92.300px;opacity:.6" width="112" height="106" viewBox="0 0 112 106" stroke-width="1.400" stroke-dasharray=".72 .28"><path d="M0 0.7h2" stroke="#88846f"/><path d="M1 2.7h1" stroke="#88846f"/><path d="M3 2.7h23" stroke="#88846f"/><path d="M27 2.7h9" stroke="#88846f"/><path d="M37 2.7h9" stroke="#88846f"/><path d="M47 2.7h7" stroke="#88846f"/><path d="M55 2.7h10" stroke="#88846f"/><path d="M66 2.7h2" stroke="#88846f"/><path d="M69 2.7h3" stroke="#88846f"/><path d="M1 4.7h1" stroke="#88846f"/><path d="M1 6.7h1" stroke="#88846f"/><path d="M3 6.7h24" stroke="#88846f"/><path d="M28 6.7h7" stroke="#88846f"/><path d="M1 8.7h2" stroke="#88846f"/><path d="M0 12.7h8" stroke="#f92672"/><path d="M9 12.7h9" stroke="#e6db74"/><path d="M0 14.7h8" stroke="#f92672"/><path d="M9 14.7h12" stroke="#e6db74"/><path d="M0 16.7h8" stroke="#f92672"/><path d="M9 16.7h13" stroke="#e6db74"/><path d="M0 18.7h8" stroke="#f92672"/><path d="M9 18.7h21" stroke="#e6db74"/><path d="M0 20.7h8" stroke="#f92672"/><path d="M9 20.7h17" stroke="#e6db74"/><path d="M0 22.7h8" stroke="#f92672"/><path d="M9 22.7h17" stroke="#e6db74"/><path d="M0 24.7h8" stroke="#f92672"/><path d="M9 24.7h13" stroke="#e6db74"/><path d="M0 26.7h8" stroke="#f92672"/><path d="M9 26.7h14" stroke="#e6db74"/><path d="M0 30.7h4" stroke="#66d9ef"/><path d="M5 30.7h8" stroke="#a6e22e"/><path d="M13 30.7h1" stroke="#c9b23a"/><path d="M14 30.7h4" stroke="#66d9ef"/><path d="M18 30.7h1" stroke="#c9b23a"/><path d="M0 32.7h1" stroke="#c9b23a"/><path d="M4 34.7h6" stroke="#a6e22e"/><path d="M10 34.7h1" stroke="#c9b23a"/><path d="M11 34.7h16" stroke="#e6db74"/><path d="M27 34.7h1" stroke="#c9b23a"/><path d="M28 34.7h1" stroke="#c9b23a"/><path d="M4 38.7h2" stroke="#88846f"/><path d="M7 38.7h5" stroke="#88846f"/><path d="M13 38.7h4" stroke="#88846f"/><path d="M18 38.7h11" stroke="#88846f"/><path d="M30 38.7h2" stroke="#88846f"/><path d="M4 40.7h15" stroke="#a6e22e"/><path d="M20 40.7h9" stroke="#f8f8f2"/><path d="M29 40.7h1" stroke="#c9b23a"/><path d="M4 42.7h8" stroke="#a6e22e"/><path d="M13 42.7h10" stroke="#f8f8f2"/><path d="M23 42.7h1" stroke="#c9b23a"/><path d="M4 44.7h13" stroke="#a6e22e"/><path d="M17 44.7h1" stroke="#c9b23a"/><path d="M18 44.7h1" stroke="#f92672"/><path d="M19 44.7h9" stroke="#f8f8f2"/><path d="M28 44.7h1" stroke="#c9b23a"/><path d="M29 44.7h1" stroke="#c9b23a"/><path d="M4 46.7h6" stroke="#a6e22e"/><path d="M10 46.7h1" stroke="#c9b23a"/><path d="M11 46.7h49" stroke="#e6db74"/><path d="M60 46.7h1" stroke="#c9b23a"/><path d="M11 48.7h17" stroke="#f8f8f2"/><path d="M28 48.7h1" stroke="#c9b23a"/><path d="M11 50.7h15" stroke="#f8f8f2"/><path d="M26 50.7h1" stroke="#c9b23a"/><path d="M11 52.7h1" stroke="#c9b23a"/><path d="M12 52.7h18" stroke="#f8f8f2"/><path d="M31 52.7h1" stroke="#f92672"/><path d="M33 52.7h21" stroke="#f8f8f2"/><path d="M54 52.7h1" stroke="#c9b23a"/><path d="M56 52.7h1" stroke="#f92672"/><path d="M58 52.7h7" stroke="#e6db74"/><path d="M66 52.7h1" stroke="#f92672"/><path d="M68 52.7h2" stroke="#e6db74"/><path d="M70 52.7h1" stroke="#c9b23a"/><path d="M11 54.7h1" stroke="#c9b23a"/><path d="M12 54.7h18" stroke="#f8f8f2"/><path d="M31 54.7h1" stroke="#f92672"/><path d="M33 54.7h15" stroke="#f8f8f2"/><path d="M48 54.7h1" stroke="#c9b23a"/><path d="M50 54.7h1" stroke="#f92672"/><path d="M52 54.7h4" stroke="#e6db74"/><path d="M57 54.7h1" stroke="#f92672"/><path d="M59 54.7h2" stroke="#e6db74"/><path d="M61 54.7h1" stroke="#c9b23a"/><path d="M11 56.7h1" stroke="#c9b23a"/><path d="M12 56.7h18" stroke="#f8f8f2"/><path d="M31 56.7h1" stroke="#f92672"/><path d="M33 56.7h16" stroke="#f8f8f2"/><path d="M49 56.7h1" stroke="#c9b23a"/><path d="M51 56.7h1" stroke="#f92672"/><path d="M53 56.7h5" stroke="#e6db74"/><path d="M59 56.7h1" stroke="#f92672"/><path d="M61 56.7h2" stroke="#e6db74"/><path d="M63 56.7h1" stroke="#c9b23a"/><path d="M11 58.7h1" stroke="#c9b23a"/><path d="M12 58.7h18" stroke="#f8f8f2"/><path d="M31 58.7h1" stroke="#f92672"/><path d="M33 58.7h23" stroke="#f8f8f2"/><path d="M56 58.7h1" stroke="#c9b23a"/><path d="M58 58.7h1" stroke="#f92672"/><path d="M60 58.7h28" stroke="#e6db74"/><path d="M89 58.7h1" stroke="#f92672"/><path d="M91 58.7h2" stroke="#e6db74"/><path d="M93 58.7h1" stroke="#c9b23a"/><path d="M94 58.7h1" stroke="#c9b23a"/><path d="M4 62.7h8" stroke="#66d9ef"/><path d="M13 62.7h9" stroke="#f8f8f2"/><path d="M23 62.7h1" stroke="#f92672"/><path d="M25 62.7h18" stroke="#f8f8f2"/><path d="M44 62.7h1" stroke="#f92672"/><path d="M46 62.7h3" stroke="#ae81ff"/><path d="M49 62.7h1" stroke="#c9b23a"/><path d="M4 64.7h8" stroke="#66d9ef"/><path d="M13 64.7h9" stroke="#f8f8f2"/><path d="M23 64.7h1" stroke="#f92672"/><path d="M25 64.7h18" stroke="#f8f8f2"/><path d="M44 64.7h1" stroke="#f92672"/><path d="M46 64.7h3" stroke="#ae81ff"/><path d="M49 64.7h1" stroke="#c9b23a"/><path d="M4 66.7h6" stroke="#a6e22e"/><path d="M10 66.7h1" stroke="#c9b23a"/><path d="M11 66.7h27" stroke="#e6db74"/><path d="M38 66.7h1" stroke="#c9b23a"/><path d="M40 66.7h9" stroke="#f8f8f2"/><path d="M49 66.7h1" stroke="#c9b23a"/><path d="M51 66.7h9" stroke="#f8f8f2"/><path d="M60 66.7h1" stroke="#c9b23a"/><path d="M61 66.7h1" stroke="#c9b23a"/><path d="M4 68.7h2" stroke="#f92672"/><path d="M6 68.7h1" stroke="#c9b23a"/><path d="M7 68.7h18" stroke="#a6e22e"/><path d="M25 68.7h1" stroke="#c9b23a"/><path d="M26 68.7h4" stroke="#ae81ff"/><path d="M30 68.7h1" stroke="#c9b23a"/><path d="M32 68.7h1" stroke="#f92672"/><path d="M33 68.7h10" stroke="#f8f8f2"/><path d="M43 68.7h1" stroke="#c9b23a"/><path d="M45 68.7h2" stroke="#f92672"/><path d="M48 68.7h6" stroke="#f8f8f2"/><path d="M54 68.7h1" stroke="#c9b23a"/><path d="M56 68.7h1" stroke="#c9b23a"/><path d="M8 70.7h6" stroke="#a6e22e"/><path d="M14 70.7h1" stroke="#c9b23a"/><path d="M15 70.7h23" stroke="#e6db74"/><path d="M38 70.7h1" stroke="#c9b23a"/><path d="M39 70.7h1" stroke="#c9b23a"/><path d="M8 72.7h6" stroke="#f92672"/><path d="M14 72.7h1" stroke="#c9b23a"/><path d="M4 74.7h1" stroke="#c9b23a"/><path d="M4 78.7h6" stroke="#a6e22e"/><path d="M10 78.7h1" stroke="#c9b23a"/><path d="M11 78.7h3" stroke="#e6db74"/><path d="M15 78.7h6" stroke="#f8f8f2"/><path d="M22 78.7h15" stroke="#e6db74"/><path d="M37 78.7h1" stroke="#c9b23a"/><path d="M39 78.7h10" stroke="#f8f8f2"/><path d="M50 78.7h1" stroke="#f92672"/><path d="M52 78.7h1" stroke="#c9b23a"/><path d="M53 78.7h8" stroke="#a6e22e"/><path d="M61 78.7h1" stroke="#c9b23a"/><path d="M62 78.7h1" stroke="#c9b23a"/><path d="M63 78.7h4" stroke="#ae81ff"/><path d="M68 78.7h1" stroke="#f92672"/><path d="M70 78.7h4" stroke="#ae81ff"/><path d="M74 78.7h1" stroke="#c9b23a"/><path d="M75 78.7h1" stroke="#c9b23a"/><path d="M11 80.7h1" stroke="#c9b23a"/><path d="M12 80.7h18" stroke="#f8f8f2"/><path d="M31 80.7h1" stroke="#f92672"/><path d="M33 80.7h22" stroke="#f8f8f2"/><path d="M55 80.7h1" stroke="#c9b23a"/><path d="M57 80.7h1" stroke="#f92672"/><path d="M59 80.7h10" stroke="#e6db74"/><path d="M70 80.7h1" stroke="#f92672"/><path d="M72 80.7h10" stroke="#e6db74"/><path d="M82 80.7h1" stroke="#c9b23a"/><path d="M83 80.7h1" stroke="#c9b23a"/><path d="M4 84.7h6" stroke="#a6e22e"/><path d="M10 84.7h1" stroke="#c9b23a"/><path d="M11 84.7h27" stroke="#e6db74"/><path d="M39 84.7h6" stroke="#f8f8f2"/><path d="M46 84.7h10" stroke="#e6db74"/><path d="M56 84.7h1" stroke="#c9b23a"/><path d="M58 84.7h30" stroke="#a6e22e"/><path d="M88 84.7h1" stroke="#c9b23a"/><path d="M89 84.7h1" stroke="#c9b23a"/><path d="M90 84.7h1" stroke="#c9b23a"/><path d="M91 84.7h1" stroke="#c9b23a"/><path d="M4 88.7h3" stroke="#f92672"/><path d="M8 88.7h1" stroke="#c9b23a"/><path d="M9 88.7h3" stroke="#66d9ef"/><path d="M13 88.7h1" stroke="#f8f8f2"/><path d="M15 88.7h1" stroke="#f92672"/><path d="M17 88.7h2" stroke="#ae81ff"/><path d="M19 88.7h1" stroke="#c9b23a"/><path d="M21 88.7h1" stroke="#f8f8f2"/><path d="M23 88.7h2" stroke="#f92672"/><path d="M26 88.7h1" stroke="#ae81ff"/><path d="M27 88.7h1" stroke="#c9b23a"/><path d="M29 88.7h1" stroke="#f8f8f2"/><path d="M30 88.7h2" stroke="#f92672"/><path d="M32 88.7h1" stroke="#c9b23a"/><path d="M34 88.7h1" stroke="#c9b23a"/><path d="M8 90.7h6" stroke="#a6e22e"/><path d="M14 90.7h1" stroke="#c9b23a"/><path d="M15 90.7h31" stroke="#e6db74"/><path d="M46 90.7h1" stroke="#c9b23a"/><path d="M48 90.7h1" stroke="#f8f8f2"/><path d="M49 90.7h1" stroke="#c9b23a"/><path d="M50 90.7h1" stroke="#c9b23a"/><path d="M8 92.7h10" stroke="#a6e22e"/><path d="M18 92.7h1" stroke="#c9b23a"/><path d="M19 92.7h4" stroke="#ae81ff"/><path d="M24 92.7h1" stroke="#f92672"/><path d="M26 92.7h18" stroke="#f8f8f2"/><path d="M44 92.7h1" stroke="#c9b23a"/><path d="M45 92.7h1" stroke="#c9b23a"/><path d="M4 94.7h1" stroke="#c9b23a"/><path d="M4 96.7h6" stroke="#a6e22e"/><path d="M10 96.7h1" stroke="#c9b23a"/><path d="M11 96.7h19" stroke="#e6db74"/><path d="M30 96.7h1" stroke="#c9b23a"/><path d="M31 96.7h1" stroke="#c9b23a"/><path d="M4 98.7h6" stroke="#a6e22e"/><path d="M10 98.7h1" stroke="#c9b23a"/><path d="M11 98.7h6" stroke="#f8f8f2"/><path d="M17 98.7h1" stroke="#c9b23a"/><path d="M18 98.7h1" stroke="#c9b23a"/><path d="M4 100.7h11" stroke="#a6e22e"/><path d="M15 100.7h1" stroke="#c9b23a"/><path d="M16 100.7h1" stroke="#c9b23a"/><path d="M17 100.7h1" stroke="#c9b23a"/><path d="M0 102.7h1" stroke="#c9b23a"/></svg>
<div class="b" style="left:1704px;top:92px;width:1px;height:437px;background:#34352f;"></div>
<div class="b" style="left:1704px;top:92px;width:14px;height:1px;background:#34352f;"></div>
<div class="b" style="left:1705px;top:259px;width:13px;height:2px;background:#c8c8c4;"></div>
<div class="b" style="left:284px;top:528px;width:1434px;height:1px;background:#414339;"></div>
<span class="t" style="left:304.5px;top:537.0px;font-size:11px;line-height:20px;color:#8c8c85;letter-spacing:-1.149px;">PROBLEMS</span>
<span class="t" style="left:382.0px;top:537.0px;font-size:11px;line-height:20px;color:#8c8c85;letter-spacing:-0.947px;">OUTPUT</span>
<span class="t" style="left:447.3px;top:537.0px;font-size:11px;line-height:20px;color:#8c8c85;letter-spacing:-0.914px;">DEBUG CONSOLE</span>
<span class="t" style="left:556.7px;top:537.0px;font-size:11px;line-height:20px;color:#f8f8f2;letter-spacing:-0.704px;">TERMINAL</span>
<span class="t" style="left:632.2px;top:537.0px;font-size:11px;line-height:20px;color:#8c8c85;letter-spacing:-1.651px;">PORTS</span>
<span class="t" style="left:687.7px;top:537.0px;font-size:11px;line-height:20px;color:#8c8c85;letter-spacing:-0.934px;">ESP-IDF</span>
<div class="b" style="left:554.5px;top:557px;width:55px;height:1px;background:#d8d8d2;"></div>
<svg class="b" style="left:1598.7px;top:539px;" width="16" height="16" viewBox="0 0 16 16" fill="none"><path d="M14 7v1H8v6H7V8H1V7h6V1h1v6h6z" fill="#cccccc" /></svg>
<svg class="b" style="left:1616px;top:541px;" width="11" height="11" viewBox="0 0 16 16" fill="none"><path d="M7.976 10.072l4.357-4.357.62.618L8.284 11h-.618L3 6.333l.619-.618 4.357 4.357z" fill="#cccccc" /></svg>
<svg class="b" style="left:1636px;top:538px;" width="16" height="16" viewBox="0 0 16 16" fill="none"><path d="M4 8a1 1 0 1 1-2 0 1 1 0 0 1 2 0zm5 0a1 1 0 1 1-2 0 1 1 0 0 1 2 0zm5 0a1 1 0 1 1-2 0 1 1 0 0 1 2 0z" fill="#cccccc" /></svg>
<svg class="b" style="left:1661px;top:538px;" width="16" height="16" viewBox="0 0 16 16" fill="none"><path d="M8.024 5.928l-4.357 4.357-.62-.618L7.716 5h.618L13 9.667l-.619.618-4.357-4.357z" fill="#cccccc" /></svg>
<svg class="b" style="left:1687px;top:538px;" width="16" height="16" viewBox="0 0 16 16" fill="none"><path d="M8 8.707l3.646 3.647.708-.707L8.707 8l3.647-3.646-.707-.708L8 7.293 4.354 3.646l-.707.708L7.293 8l-3.646 3.646.707.708L8 8.707z" fill="#cccccc" /></svg>
<div class="b" style="left:304px;top:578px;width:21px;height:16px;background:#cccccc;"></div>
<div class="term" style="left:304px;top:577.800px"><span style="color:#272822"> * </span> Executing task: C:\Users\12397\esp\v5.2_tools\python_env\idf5.2_py3.11_env\Scripts\python.exe C:\Users\12397\esp\v5.2.5\esp-idf\tools\idf_size.py c:\Users\12397\Advance_project\b
uild\Advance_project.map

Total sizes:
Used static IRAM:   16383 bytes (      1 remain, 100.0% used)
      .text size:   15356 bytes
   .vectors size:    1027 bytes
Used stat D/IRAM:   52655 bytes ( 293201 remain, 15.2% used)
      .data size:   10448 bytes
      .bss  size:    2240 bytes
      .text size:   39967 bytes
Used Flash size :  138111 bytes
           .text:   96175 bytes
         .rodata:   41680 bytes
Total image size:  204909 bytes (.bin may be padded larger)</div>
<div class="b" style="left:291.200px;top:580.600px;width:5px;height:5px;border:2px solid #85857f;border-radius:50%"></div>
<div class="b" style="left:1584px;top:577px;width:1px;height:289px;background:#3a3b35;"></div>
<div class="b" style="left:1585px;top:577px;width:13px;height:1px;background:#34352f;"></div>
<div class="b" style="left:1585px;top:577px;width:4px;height:6px;background:#6e6e68;"></div>
<div class="b" style="left:1598px;top:562px;width:1px;height:304px;background:#414339;"></div>
<div class="b" style="left:1599px;top:585.5px;width:119px;height:21.5px;background:#3f3f35;"></div>
<svg class="b" style="left:1609px;top:566.5px;" width="15" height="15" viewBox="0 0 16 16" fill="none"><rect x="1.500" y="2" width="13" height="12" rx=".8" stroke="#cccccc" stroke-width="1.2"/><path d="M4.300 5.300l3 2.700-3 2.700M8.500 11h3.500" stroke="#cccccc" stroke-width="1.2" fill="none" /></svg>
<svg class="b" style="left:1609px;top:588.5px;" width="15" height="15" viewBox="0 0 16 16" fill="none"><rect x="1.500" y="2" width="13" height="12" rx=".8" stroke="#cccccc" stroke-width="1.2"/><path d="M4.300 5.300l3 2.700-3 2.700M8.500 11h3.500" stroke="#cccccc" stroke-width="1.2" fill="none" /></svg>
<span class="t" style="left:1628.8px;top:564.4px;font-size:13px;line-height:20px;color:#cccccc;letter-spacing:-0.853px;">ESP-IDF ...</span>
<span class="t" style="left:1628.8px;top:586.4px;font-size:13px;line-height:20px;color:#e4e4e0;letter-spacing:-0.059px;">python...</span>
<svg class="b" style="left:1692px;top:566.5px;" width="16" height="16" viewBox="0 0 16 16" fill="none"><path d="M14.431 3.323l-8.47 10-.79-.036-3.35-4.77.818-.574 2.978 4.24 8.051-9.506.764.646z" fill="#9a9a94" /></svg>
<svg class="b" style="left:1692px;top:588.5px;" width="16" height="16" viewBox="0 0 16 16" fill="none"><path d="M14.431 3.323l-8.47 10-.79-.036-3.35-4.77.818-.574 2.978 4.24 8.051-9.506.764.646z" fill="#9a9a94" /></svg>
<div class="b" style="left:1256px;top:812.500px;width:451px;height:44px;background:#1e1f1c;box-shadow:0 0 8px 2px rgba(0,0,0,.6)"></div>
<svg class="b" style="left:1266.7px;top:826.1px;" width="16" height="16" viewBox="0 0 16 16" fill="none"><circle cx="8" cy="8" r="6.900" stroke="#3794ff" stroke-width="1.200"/><path d="M8 7v4.500" stroke="#3794ff" stroke-width="1.300"/><circle cx="8" cy="5" r=".9" fill="#3794ff"/></svg>
<span class="t" style="left:1288.4px;top:825.3px;font-size:13px;line-height:20px;color:#cccccc;letter-spacing:-0.258px;">Build Successfully</span>
<span class="t" style="left:1399.0px;top:855.0px;font-size:19.5px;line-height:24px;color:rgba(200,200,196,.5);letter-spacing:0.114px;">Activate Windows</span>
<span class="t" style="left:1399.0px;top:881.0px;font-size:14.5px;line-height:18px;color:rgba(200,200,196,.5);letter-spacing:0.053px;">Go to Settings to activate Windows.</span>
</body></html>
